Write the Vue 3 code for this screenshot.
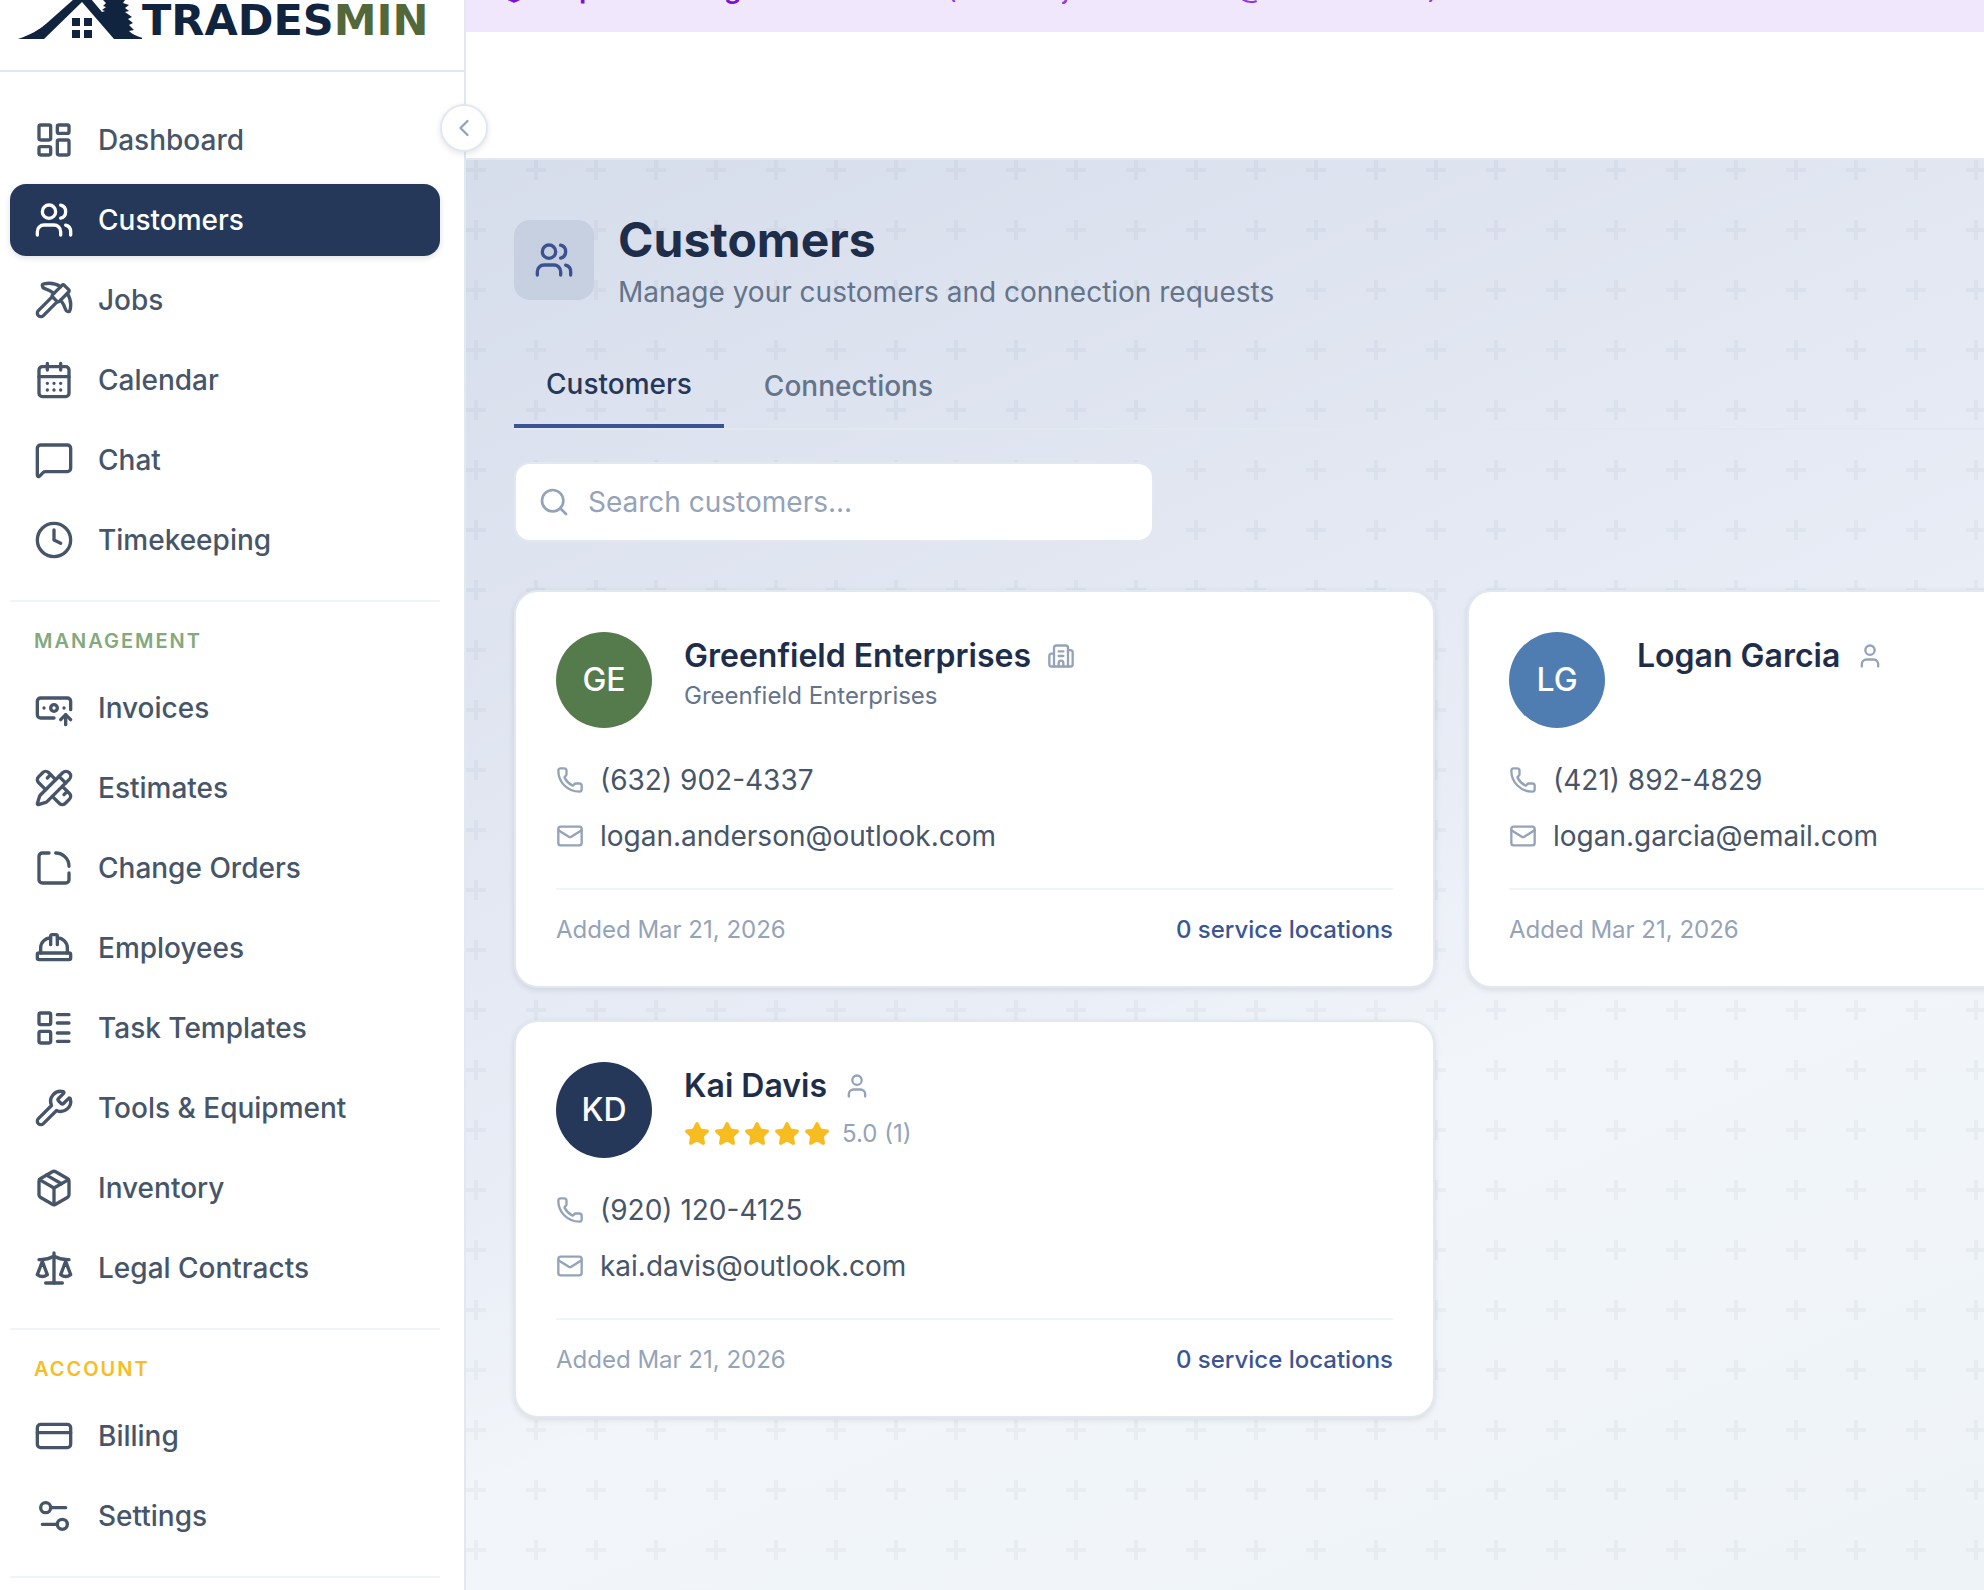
<script setup>
import { ref } from 'vue'

const icons = {
  dashboard: '<rect width="7" height="9" x="3" y="3" rx="1"/><rect width="7" height="5" x="14" y="3" rx="1"/><rect width="7" height="9" x="14" y="12" rx="1"/><rect width="7" height="5" x="3" y="16" rx="1"/>',
  users: '<path d="M16 21v-2a4 4 0 0 0-4-4H6a4 4 0 0 0-4 4v2"/><path d="M16 3.128a4 4 0 0 1 0 7.744"/><path d="M22 21v-2a4 4 0 0 0-3-3.87"/><circle cx="9" cy="7" r="4"/>',
  pickaxe: '<path d="m14 13-8.381 8.38a1 1 0 0 1-3.001-3L11 9.999"/><path d="M15.973 4.027A13 13 0 0 0 5.902 2.373c-1.398.342-1.092 2.158.277 2.601a19.9 19.9 0 0 1 5.822 3.024"/><path d="M16.001 11.999a19.9 19.9 0 0 1 3.024 5.824c.444 1.369 2.26 1.676 2.603.278A13 13 0 0 0 20 8.069"/><path d="M18.352 3.352a1.205 1.205 0 0 0-1.704 0l-5.296 5.296a1.205 1.205 0 0 0 0 1.704l2.296 2.296a1.205 1.205 0 0 0 1.704 0l5.296-5.296a1.205 1.205 0 0 0 0-1.704z"/>',
  calendar: '<path d="M8 2v4M16 2v4"/><rect width="18" height="18" x="3" y="4" rx="2"/><path d="M3 10h18M8 14h.01M12 14h.01M16 14h.01M8 18h.01M12 18h.01M16 18h.01"/>',
  chat: '<path d="M22 17a2 2 0 0 1-2 2H6.828a2 2 0 0 0-1.414.586l-2.202 2.202A.71.71 0 0 1 2 21.286V5a2 2 0 0 1 2-2h16a2 2 0 0 1 2 2z"/>',
  clock: '<circle cx="12" cy="12" r="10"/><path d="M12 6v6l4 2"/>',
  invoice: '<path d="M12 18H4a2 2 0 0 1-2-2V8a2 2 0 0 1 2-2h16a2 2 0 0 1 2 2v5"/><path d="M18 12h.01M6 12h.01"/><path d="M19 22v-6"/><path d="m22 19-3-3-3 3"/><circle cx="12" cy="12" r="2"/>',
  estimate: '<path d="M13 7 8.7 2.7a2.41 2.41 0 0 0-3.4 0L2.7 5.3a2.41 2.41 0 0 0 0 3.4L7 13"/><path d="m8 6 2-2M18 16l2-2"/><path d="m17 11 4.3 4.3c.94.94.94 2.46 0 3.4l-2.6 2.6c-.94.94-2.46.94-3.4 0L11 17"/><path d="M21.174 6.812a1 1 0 0 0-3.986-3.987L3.842 16.174a2 2 0 0 0-.5.83l-1.321 4.352a.5.5 0 0 0 .623.622l4.353-1.32a2 2 0 0 0 .83-.497z"/><path d="m15 5 4 4"/>',
  change: '<path d="M21 11a8 8 0 0 0-8-8"/><path d="M9 3H5a2 2 0 0 0-2 2v14a2 2 0 0 0 2 2h14a2 2 0 0 0 2-2v-4"/>',
  hat: '<path d="M10 10V5a1 1 0 0 1 1-1h2a1 1 0 0 1 1 1v5"/><path d="M14 6a6 6 0 0 1 6 6v3"/><path d="M4 15v-3a6 6 0 0 1 6-6"/><rect x="2" y="15" width="20" height="4" rx="1"/>',
  list: '<rect width="7" height="7" x="3" y="3" rx="1"/><rect width="7" height="7" x="3" y="14" rx="1"/><path d="M14 4h7M14 9h7M14 15h7M14 20h7"/>',
  wrench: '<path d="M14.7 6.3a1 1 0 0 0 0 1.4l1.6 1.6a1 1 0 0 0 1.4 0l3.106-3.105c.32-.322.863-.22.983.218a6 6 0 0 1-8.259 7.057l-7.91 7.91a1 1 0 0 1-2.999-3l7.91-7.91a6 6 0 0 1 7.057-8.259c.438.12.54.662.219.984z"/>',
  box: '<path d="M11 21.73a2 2 0 0 0 2 0l7-4A2 2 0 0 0 21 16V8a2 2 0 0 0-1-1.73l-7-4a2 2 0 0 0-2 0l-7 4A2 2 0 0 0 3 8v8a2 2 0 0 0 1 1.73z"/><path d="M12 22V12"/><path d="M3.29 7 12 12l8.71-5"/><path d="m7.5 4.27 9 5.15"/>',
  scale: '<path d="M12 3v18"/><path d="m19 8 3 8a5 5 0 0 1-6 0zV7"/><path d="M3 7h1a17 17 0 0 0 8-2 17 17 0 0 0 8 2h1"/><path d="m5 8 3 8a5 5 0 0 1-6 0zV7"/><path d="M7 21h10"/>',
  card: '<rect width="20" height="14" x="2" y="5" rx="2"/><path d="M2 10h20"/>',
  settings: '<path d="M14 17H5M19 7h-9"/><circle cx="17" cy="17" r="3"/><circle cx="7" cy="7" r="3"/>',
  company: '<path d="M10 12h4M10 8h4"/><path d="M14 21v-3a2 2 0 0 0-4 0v3"/><path d="M6 10H4a2 2 0 0 0-2 2v7a2 2 0 0 0 2 2h16a2 2 0 0 0 2-2V9a2 2 0 0 0-2-2h-2"/><path d="M6 21V5a2 2 0 0 1 2-2h8a2 2 0 0 1 2 2v16"/>',
  person: '<path d="M19 21v-2a4 4 0 0 0-4-4H9a4 4 0 0 0-4 4v2"/><circle cx="12" cy="7" r="4"/>',
  phone: '<path d="M13.832 16.568a1 1 0 0 0 1.213-.303l.355-.465A2 2 0 0 1 17 15h3a2 2 0 0 1 2 2v3a2 2 0 0 1-2 2A18 18 0 0 1 2 4a2 2 0 0 1 2-2h3a2 2 0 0 1 2 2v3a2 2 0 0 1-.8 1.6l-.468.351a1 1 0 0 0-.292 1.233 14 14 0 0 0 6.392 6.384"/>',
  mail: '<path d="m22 7-8.991 5.727a2 2 0 0 1-2.009 0L2 7"/><rect x="2" y="4" width="20" height="16" rx="2"/>',
  search: '<path d="m21 21-4.34-4.34"/><circle cx="11" cy="11" r="8"/>',
  star: '<path fill="currentColor" d="M11.525 2.295a.53.53 0 0 1 .95 0l2.31 4.679a2.123 2.123 0 0 0 1.595 1.16l5.166.756a.53.53 0 0 1 .294.904l-3.736 3.638a2.123 2.123 0 0 0-.611 1.878l.882 5.14a.53.53 0 0 1-.771.56l-4.618-2.428a2.122 2.122 0 0 0-1.973 0L6.396 21.01a.53.53 0 0 1-.77-.56l.881-5.139a2.122 2.122 0 0 0-.611-1.879L2.16 9.795a.53.53 0 0 1 .294-.906l5.165-.755a2.122 2.122 0 0 0 1.597-1.16z"/>',
  chevron: '<path d="m15 18-6-6 6-6"/>',
  shield: '<path d="M20 13c0 5-3.5 7.500-7.660 8.950a1 1 0 0 1-.67-.01C7.500 20.500 4 18 4 13V6a1 1 0 0 1 1-1c2 0 4.500-1.200 6.240-2.720a1.170 1.170 0 0 1 1.520 0C14.510 3.810 17 5 19 5a1 1 0 0 1 1 1z"/><path d="M12 8v4M12 16h.01"/>',
}

const groups = [
  {
    items: [
      { label: 'Dashboard', icon: 'dashboard' },
      { label: 'Customers', icon: 'users', active: true },
      { label: 'Jobs', icon: 'pickaxe' },
      { label: 'Calendar', icon: 'calendar' },
      { label: 'Chat', icon: 'chat' },
      { label: 'Timekeeping', icon: 'clock' },
    ],
  },
  {
    title: 'Management',
    tone: 'green',
    items: [
      { label: 'Invoices', icon: 'invoice' },
      { label: 'Estimates', icon: 'estimate' },
      { label: 'Change Orders', icon: 'change' },
      { label: 'Employees', icon: 'hat' },
      { label: 'Task Templates', icon: 'list' },
      { label: 'Tools & Equipment', icon: 'wrench' },
      { label: 'Inventory', icon: 'box' },
      { label: 'Legal Contracts', icon: 'scale' },
    ],
  },
  {
    title: 'Account',
    tone: 'amber',
    items: [
      { label: 'Billing', icon: 'card' },
      { label: 'Settings', icon: 'settings' },
    ],
  },
]

const customers = [
  {
    name: 'Greenfield Enterprises', initials: 'GE', tone: 'green', kind: 'company',
    company: 'Greenfield Enterprises', phone: '(632) 902-4337', email: 'logan.anderson@outlook.com',
  },
  {
    name: 'Logan Garcia', initials: 'LG', tone: 'blue', kind: 'person',
    phone: '(421) 892-4829', email: 'logan.garcia@email.com',
  },
  {
    name: 'Kai Davis', initials: 'KD', tone: 'navy', kind: 'person',
    rating: '5.0 (1)', phone: '(920) 120-4125', email: 'kai.davis@outlook.com',
  },
]

const query = ref('')
</script>

<template>
  <div class="app">
    <aside class="sidebar">
      <a class="logo" href="#" aria-label="Tradesmin">
        <svg class="mark" viewBox="0 0 124 40" aria-hidden="true">
          <path d="M0 39C12 35 21 30 29 23L56-1h17l11 13 3-1-3-1 4-3-3-1 3-3-3-3h22l-2 3 6 2-4 3 4 3-4 1 7 5-4 2 5 4-4 2 5 5-5 1c4 4 10 6 17 8H96L64 2 26 39z" />
          <path d="M54 18h8v8h-8zM66 18h8v8h-8zM54 30h8v8h-8zM66 30h8v8h-8z" />
        </svg>
        <span class="wordmark">TRADES<em>MIN</em></span>
      </a>
      <button class="collapse" type="button" aria-label="Collapse sidebar">
        <svg class="icon i28" viewBox="0 0 24 24" v-html="icons.chevron"></svg>
      </button>
      <nav class="nav">
        <section v-for="(group, i) in groups" :key="i" class="group">
          <h2 v-if="group.title" class="group-title" :class="group.tone">{{ group.title }}</h2>
          <a
            v-for="item in group.items" :key="item.label"
            class="item" :class="{ active: item.active }" href="#"
          >
            <svg class="icon i40" viewBox="0 0 24 24" aria-hidden="true" v-html="icons[item.icon]"></svg>
            <span>{{ item.label }}</span>
          </a>
        </section>
      </nav>
    </aside>

    <div class="main">
      <div class="banner">
        <svg class="icon i32" viewBox="0 0 24 24" aria-hidden="true" v-html="icons.shield"></svg>
        <p><strong>Impersonating</strong> Mark Johnson (marcus.johnson.1842@outlook.com)</p>
      </div>
      <header class="topbar"></header>

      <main class="content">
        <div class="page-head">
          <div class="page-icon">
            <svg class="icon i40" viewBox="0 0 24 24" aria-hidden="true" v-html="icons.users"></svg>
          </div>
          <div>
            <h1>Customers</h1>
            <p class="subtitle">Manage your customers and connection requests</p>
          </div>
        </div>

        <div class="tabs" role="tablist">
          <button class="tab selected" type="button" role="tab" aria-selected="true">Customers</button>
          <button class="tab" type="button" role="tab" aria-selected="false">Connections</button>
        </div>

        <label class="search">
          <svg class="icon i32" viewBox="0 0 24 24" aria-hidden="true" v-html="icons.search"></svg>
          <input v-model="query" type="text" placeholder="Search customers..." aria-label="Search customers" />
        </label>

        <div class="cards">
          <article v-for="c in customers" :key="c.name" class="card">
            <div class="card-head">
              <div class="avatar" :class="c.tone">{{ c.initials }}</div>
              <div>
                <h3>
                  {{ c.name }}
                  <svg class="icon i28 muted" viewBox="0 0 24 24" aria-hidden="true" v-html="icons[c.kind]"></svg>
                </h3>
                <p v-if="c.company" class="company">{{ c.company }}</p>
                <div v-if="c.rating" class="rating">
                  <span class="stars">
                    <svg v-for="n in 5" :key="n" class="icon i26" viewBox="0 0 24 24" aria-hidden="true" v-html="icons.star"></svg>
                  </span>
                  <span>{{ c.rating }}</span>
                </div>
              </div>
            </div>
            <div class="contacts">
              <div class="contact">
                <svg class="icon i28 muted" viewBox="0 0 24 24" aria-hidden="true" v-html="icons.phone"></svg>
                <span>{{ c.phone }}</span>
              </div>
              <div class="contact">
                <svg class="icon i28 muted" viewBox="0 0 24 24" aria-hidden="true" v-html="icons.mail"></svg>
                <span>{{ c.email }}</span>
              </div>
            </div>
            <div class="card-foot">
              <span>Added Mar 21, 2026</span>
              <span class="locations">0 service locations</span>
            </div>
          </article>
        </div>
      </main>
    </div>
  </div>
</template>

<style>
body {
  margin: 0;
  background: #fff;
}
</style>

<style scoped>
.app {
  display: flex;
  min-height: 100vh;
  font-family: Inter, "Liberation Sans", sans-serif;
  font-size: 28px;
  line-height: 40px;
  color: #475569;
}

h1, h2, h3, p {
  margin: 0;
}

button, input {
  font: inherit;
}

.icon {
  display: block;
  flex: none;
  fill: none;
  stroke: currentColor;
  stroke-width: 2;
  stroke-linecap: round;
  stroke-linejoin: round;
}

.i26 { width: 26px; height: 26px; }
.i28 { width: 28px; height: 28px; }
.i32 { width: 32px; height: 32px; }
.i40 { width: 40px; height: 40px; }
.muted { color: #94a3b8; }

/* Sidebar */
.sidebar {
  position: relative;
  z-index: 1;
  box-sizing: border-box;
  flex: 0 0 466px;
  border-right: 2px solid #e2e8f0;
  background: #fff;
}

.logo {
  display: flex;
  align-items: flex-start;
  box-sizing: border-box;
  height: 72px;
  padding-left: 18px;
  border-bottom: 2px solid #e2e8f0;
  color: #10233f;
  text-decoration: none;
}

.mark {
  display: block;
  flex: none;
  width: 124px;
  height: 40px;
  fill: #10233f;
}

.wordmark {
  font-family: "DejaVu Sans", Inter, sans-serif;
  font-size: 43px;
  font-weight: 700;
  line-height: 40px;
}

.wordmark em {
  font-style: normal;
  color: #52683a;
}

.collapse {
  position: absolute;
  top: 104px;
  right: -24px;
  display: flex;
  align-items: center;
  justify-content: center;
  box-sizing: border-box;
  width: 48px;
  height: 48px;
  padding: 0;
  border: 2px solid #e2e8f0;
  border-radius: 50%;
  background: #fff;
  color: #94a3b8;
  box-shadow: 0 2px 6px rgba(0, 0, 0, 0.1);
}

.nav {
  padding: 32px 24px 24px 10px;
}

.group {
  display: flex;
  flex-direction: column;
  gap: 8px;
  padding-bottom: 24px;
  border-bottom: 2px solid #f1f5f9;
}

.group-title {
  padding: 24px 24px 8px;
  font-size: 20px;
  font-weight: 600;
  line-height: 30px;
  letter-spacing: 2px;
  text-transform: uppercase;
}

.group-title.green { color: #84a97c; }
.group-title.amber { color: #f8bd22; }

.item {
  display: flex;
  align-items: center;
  gap: 24px;
  height: 72px;
  padding: 0 24px;
  border-radius: 16px;
  color: #475569;
  font-weight: 500;
  text-decoration: none;
}

.item.active {
  background: #25385a;
  color: #fff;
  box-shadow: 0 2px 6px rgba(0, 0, 0, 0.12);
}

/* Main column */
.main {
  display: flex;
  flex: 1;
  flex-direction: column;
  min-width: 0;
  overflow: hidden;
}

.banner {
  display: flex;
  align-items: flex-end;
  gap: 16px;
  box-sizing: border-box;
  height: 32px;
  padding: 0 32px 24px;
  overflow: hidden;
  background: #f1e7fd;
  color: #7e0fd8;
  white-space: nowrap;
}

.banner .icon {
  margin-bottom: 4px;
}

.banner p {
  color: #9333ea;
}

.banner strong {
  font-weight: 600;
  color: #7e0fd8;
}

.topbar {
  height: 126px;
  border-bottom: 2px solid #e2e8f0;
  background: #fff;
}

.content {
  flex: 1;
  padding: 48px 0 48px 48px;
  background:
    url("data:image/svg+xml,%3Csvg xmlns='http://www.w3.org/2000/svg' width='60' height='60'%3E%3Cpath d='M8 0h4v8h8v4h-8v8H8v-8H0V8h8z' fill='%2325385a' fill-opacity='.045'/%3E%3C/svg%3E"),
    linear-gradient(157deg, #d6ddeb 0%, #e9edf6 51%, #f2f6fa 64%, #eef3f7 100%);
}

.page-head {
  display: flex;
  align-items: center;
  gap: 24px;
}

.page-icon {
  display: flex;
  align-items: center;
  justify-content: center;
  width: 80px;
  height: 80px;
  border-radius: 16px;
  background: #c7d0e1;
  color: #3b5190;
}

h1 {
  font-size: 48px;
  font-weight: 700;
  line-height: 64px;
  color: #1e2e4a;
}

.subtitle {
  color: #64748b;
}

.tabs {
  display: flex;
  gap: 8px;
  margin-top: 32px;
  border-bottom: 2px solid #e2e8f0;
}

.tab {
  height: 84px;
  padding: 0 32px;
  border: 0;
  background: none;
  color: #64748b;
  font-weight: 500;
}

.tab.selected {
  border-bottom: 4px solid #3b5594;
  color: #25385a;
}

.search {
  display: flex;
  align-items: center;
  gap: 18px;
  box-sizing: border-box;
  width: 640px;
  height: 80px;
  margin-top: 32px;
  padding: 0 22px;
  border: 2px solid #e2e8f0;
  border-radius: 16px;
  background: #fff;
  color: #94a3b8;
}

.search input {
  flex: 1;
  min-width: 0;
  padding: 0;
  border: 0;
  outline: 0;
  background: none;
  color: #25385a;
}

.search input::placeholder {
  color: #94a3b8;
  opacity: 1;
}

.cards {
  display: grid;
  grid-template-columns: repeat(2, 921px);
  gap: 32px;
  margin-top: 48px;
}

.card {
  padding: 40px;
  border: 2px solid #e2e8f0;
  border-radius: 24px;
  background: #fff;
  box-shadow: 0 2px 6px rgba(0, 0, 0, 0.1);
}

.card-head {
  display: flex;
  gap: 32px;
}

.avatar {
  display: flex;
  flex: none;
  align-items: center;
  justify-content: center;
  width: 96px;
  height: 96px;
  border-radius: 50%;
  color: #fff;
  font-size: 32px;
  font-weight: 500;
}

.avatar.green { background: #557b4d; }
.avatar.blue { background: #4f7db1; }
.avatar.navy { background: #25385a; }

h3 {
  display: flex;
  align-items: center;
  gap: 16px;
  font-size: 32px;
  font-weight: 600;
  line-height: 48px;
  color: #1e2e4a;
}

.company {
  font-size: 24px;
  line-height: 32px;
  color: #64748b;
}

.rating {
  display: flex;
  align-items: center;
  gap: 12px;
  margin-top: 8px;
  font-size: 24px;
  line-height: 32px;
  color: #94a3b8;
}

.stars {
  display: flex;
  gap: 4px;
  color: #f7bd20;
}

.contacts {
  display: flex;
  flex-direction: column;
  gap: 16px;
  margin-top: 32px;
}

.contact {
  display: flex;
  align-items: center;
  gap: 16px;
}

.card-foot {
  display: flex;
  justify-content: space-between;
  margin-top: 32px;
  padding-top: 24px;
  border-top: 2px solid #f1f5f9;
  font-size: 24px;
  line-height: 32px;
  color: #94a3b8;
}

.locations {
  color: #3b5594;
  font-weight: 500;
}
</style>
